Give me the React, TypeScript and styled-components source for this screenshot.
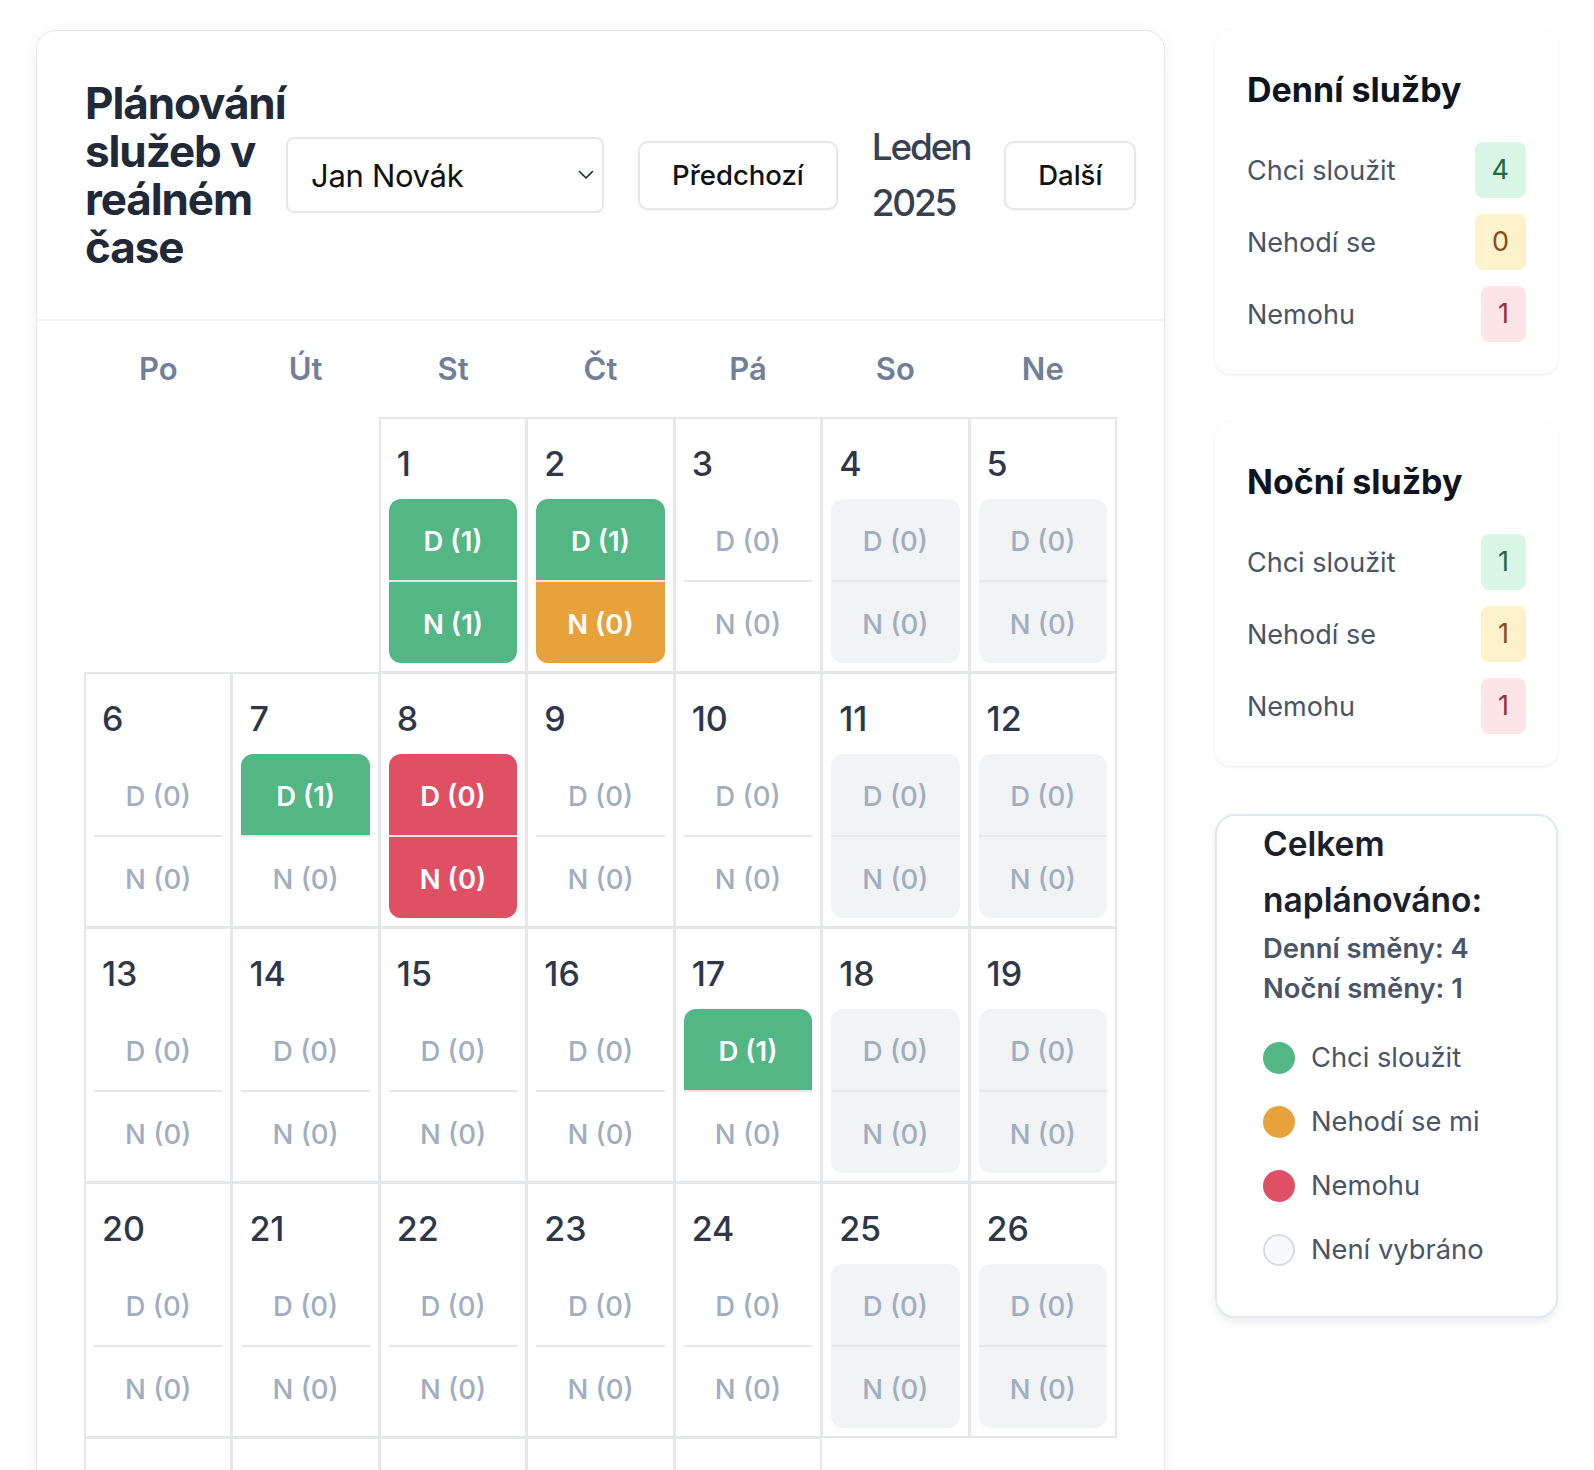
import React from 'react';
import styled, { createGlobalStyle } from 'styled-components';

const GlobalStyle = createGlobalStyle`
  html, body { margin: 0; padding: 0; background: #ffffff; }
  body {
    font-family: Inter, "Noto Sans", "Liberation Sans", sans-serif;
    color: #1a202c;
    -webkit-font-smoothing: antialiased;
  }
  * { box-sizing: border-box; }
`;

type Status = 'want' | 'meh' | 'no' | 'none';
type Tone = 'green' | 'yellow' | 'red';

const STATUS_BG: Record<Status, string> = {
  want: '#53b685',
  meh: '#e8a23b',
  no: '#e05065',
  none: 'transparent',
};

const TONES: Record<Tone, { bg: string; fg: string }> = {
  green: { bg: '#daf6e5', fg: '#276749' },
  yellow: { bg: '#fcf2cc', fg: '#8c4a17' },
  red: { bg: '#fce4e7', fg: '#9b2c3f' },
};

const Page = styled.div`
  display: flex;
  align-items: flex-start;
  gap: 50px;
  padding: 30px 36px;
`;

const MainCard = styled.section`
  flex: 1 1 auto;
  min-width: 0;
  background: #ffffff;
  border: 1px solid #e5e7eb;
  border-radius: 20px;
  box-shadow: 0 4px 20px rgba(0, 0, 0, 0.06);
`;

const Header = styled.header`
  display: flex;
  align-items: center;
  padding: 48px;
  border-bottom: 2px solid #f1f2f4;
`;

const Title = styled.h1`
  flex: 0 0 201px;
  margin: 0;
  font-size: 44px;
  line-height: 48px;
  font-weight: 700;
  letter-spacing: -0.025em;
  color: #1f2937;
`;

const Controls = styled.div`
  display: flex;
  align-items: center;
  gap: 34px;
`;

const SelectBox = styled.div`
  display: flex;
  align-items: center;
  justify-content: space-between;
  width: 318px;
  height: 76px;
  padding: 0 8px 0 23px;
  border: 2px solid #e5e7eb;
  border-radius: 8px;
  background: #ffffff;
  font-size: 31px;
  letter-spacing: -0.01em;
  color: #111111;
`;

const NavButton = styled.button`
  height: 69px;
  padding: 0 32px;
  border: 2px solid #e5e7eb;
  border-radius: 10px;
  background: #ffffff;
  box-shadow: 0 1px 2px rgba(0, 0, 0, 0.05);
  font-family: inherit;
  font-size: 27.5px;
  font-weight: 500;
  color: #111111;
  cursor: pointer;
`;

const Month = styled.div`
  width: min-content;
  font-size: 37px;
  line-height: 56px;
  font-weight: 500;
  letter-spacing: -0.06em;
  color: #374151;
`;

const CalendarBody = styled.div`
  padding: 24px 48px 48px;
`;

const WeekRow = styled.div`
  display: grid;
  grid-template-columns: repeat(7, 1fr);
  gap: 1px;
  height: 48px;
  margin-bottom: 25px;
`;

const WeekDay = styled.div`
  text-align: center;
  font-size: 31px;
  line-height: 48px;
  font-weight: 600;
  color: #718096;
`;

const Grid = styled.div`
  display: grid;
  grid-template-columns: repeat(7, 1fr);
  grid-auto-rows: 254px;
  gap: 1px;
`;

const EmptyCell = styled.div``;

const Cell = styled.div`
  display: flex;
  flex-direction: column;
  padding: 8px;
  border: 1px solid #e5e7eb;
  box-shadow: 0 0 0 1px #e5e7eb;
  background: #ffffff;
`;

const DayNum = styled.div`
  padding: 11px 8px 0;
  margin-bottom: 10px;
  font-size: 34px;
  line-height: 51px;
  font-weight: 500;
  color: #2d3748;
`;

const Block = styled.div<{ $weekend: boolean }>`
  display: flex;
  flex-direction: column;
  border-radius: 12px;
  overflow: hidden;
  background: ${(p) => (p.$weekend ? '#f2f3f5' : 'transparent')};
`;

const Slot = styled.div<{ $status: Status }>`
  height: 81px;
  display: flex;
  align-items: center;
  justify-content: center;
  padding-top: 2px;
  font-size: 27.5px;
  font-weight: ${(p) => (p.$status === 'none' ? 500 : 600)};
  background: ${(p) => STATUS_BG[p.$status]};
  color: ${(p) => (p.$status === 'none' ? '#a0aec0' : '#ffffff')};
`;

const SlotDivider = styled.div`
  height: 2px;
  background: #e5e7eb;
`;

const Side = styled.aside`
  flex: 0 0 343px;
  display: flex;
  flex-direction: column;
  gap: 48px;
`;

const StatCard = styled.div`
  background: #ffffff;
  border-radius: 16px;
  padding: 40px 32px 32px;
  box-shadow: 0 1px 4px rgba(0, 0, 0, 0.06), 0 1px 2px rgba(0, 0, 0, 0.03);
`;

const StatTitle = styled.h2`
  margin: 0 0 32px;
  font-size: 34px;
  line-height: 40px;
  font-weight: 700;
  color: #0f141e;
`;

const StatList = styled.div`
  display: flex;
  flex-direction: column;
  gap: 16px;
`;

const StatRow = styled.div`
  display: flex;
  align-items: center;
  justify-content: space-between;
`;

const StatLabel = styled.span`
  font-size: 27px;
  color: #4a5568;
`;

const Badge = styled.span<{ $tone: Tone }>`
  padding: 8px 17px;
  border-radius: 8px;
  font-size: 27px;
  line-height: 40px;
  background: ${(p) => TONES[p.$tone].bg};
  color: ${(p) => TONES[p.$tone].fg};
`;

const SummaryCard = styled.div`
  background: #ffffff;
  border: 2px solid #e2e8f0;
  border-radius: 20px;
  padding: 0 46px 50px;
  box-shadow: 0 4px 8px rgba(0, 0, 0, 0.08);
`;

const SummaryTitle = styled.h3`
  margin: 0;
  font-size: 33.5px;
  line-height: 56px;
  font-weight: 600;
  color: #1a202c;
`;

const SummaryLine = styled.div`
  font-size: 27.4px;
  line-height: 40px;
  font-weight: 600;
  color: #4a5568;
`;

const Legend = styled.div`
  margin-top: 34px;
  display: flex;
  flex-direction: column;
  gap: 32px;
`;

const LegendItem = styled.div`
  display: flex;
  align-items: center;
  gap: 16px;
  font-size: 27.3px;
  line-height: 32px;
  color: #4a5568;
`;

const Dot = styled.span<{ $color: string; $outlined?: boolean }>`
  width: 32px;
  height: 32px;
  border-radius: 50%;
  flex: 0 0 32px;
  background: ${(p) => p.$color};
  border: ${(p) => (p.$outlined ? '2px solid #d8dce2' : 'none')};
`;

const WEEKDAYS = ['Po', 'Út', 'St', 'Čt', 'Pá', 'So', 'Ne'];

const DAY_DATA: Record<number, { d: [Status, number]; n: [Status, number] }> = {
  1: { d: ['want', 1], n: ['want', 1] },
  2: { d: ['want', 1], n: ['meh', 0] },
  7: { d: ['want', 1], n: ['none', 0] },
  8: { d: ['no', 0], n: ['no', 0] },
  17: { d: ['want', 1], n: ['none', 0] },
};

const Chevron = () => (
  <svg width="16" height="10" viewBox="0 0 16 10" fill="none">
    <path d="M1.5 1.5 8 8l6.5-6.5" stroke="#1a202c" strokeWidth="1.6" strokeLinecap="round" strokeLinejoin="round" />
  </svg>
);

const DayCell = ({ day, col }: { day: number; col: number }) => {
  const data = DAY_DATA[day] ?? { d: ['none', 0] as [Status, number], n: ['none', 0] as [Status, number] };
  const weekend = col >= 5;
  return (
    <Cell>
      <DayNum>{day}</DayNum>
      <Block $weekend={weekend}>
        <Slot $status={data.d[0]}>D ({data.d[1]})</Slot>
        <SlotDivider />
        <Slot $status={data.n[0]}>N ({data.n[1]})</Slot>
      </Block>
    </Cell>
  );
};

const StatsCard = ({ title, values }: { title: string; values: [number, number, number] }) => (
  <StatCard>
    <StatTitle>{title}</StatTitle>
    <StatList>
      <StatRow>
        <StatLabel>Chci sloužit</StatLabel>
        <Badge $tone="green">{values[0]}</Badge>
      </StatRow>
      <StatRow>
        <StatLabel>Nehodí se</StatLabel>
        <Badge $tone="yellow">{values[1]}</Badge>
      </StatRow>
      <StatRow>
        <StatLabel>Nemohu</StatLabel>
        <Badge $tone="red">{values[2]}</Badge>
      </StatRow>
    </StatList>
  </StatCard>
);

export default function App() {
  const offset = 2; // 1 Jan 2025 = Wednesday
  const cells: React.ReactNode[] = [];
  for (let i = 0; i < offset; i++) cells.push(<EmptyCell key={`e${i}`} />);
  for (let d = 1; d <= 31; d++) {
    const col = (offset + d - 1) % 7;
    cells.push(<DayCell key={d} day={d} col={col} />);
  }

  return (
    <>
      <GlobalStyle />
      <Page>
        <MainCard>
          <Header>
            <Title>Plánování služeb v reálném čase</Title>
            <Controls>
              <SelectBox>
                <span>Jan Novák</span>
                <Chevron />
              </SelectBox>
              <NavButton>Předchozí</NavButton>
              <Month>Leden 2025</Month>
              <NavButton>Další</NavButton>
            </Controls>
          </Header>
          <CalendarBody>
            <WeekRow>
              {WEEKDAYS.map((w) => (
                <WeekDay key={w}>{w}</WeekDay>
              ))}
            </WeekRow>
            <Grid>{cells}</Grid>
          </CalendarBody>
        </MainCard>
        <Side>
          <StatsCard title="Denní služby" values={[4, 0, 1]} />
          <StatsCard title="Noční služby" values={[1, 1, 1]} />
          <SummaryCard>
            <SummaryTitle>Celkem naplánováno:</SummaryTitle>
            <SummaryLine>Denní směny: 4</SummaryLine>
            <SummaryLine>Noční směny: 1</SummaryLine>
            <Legend>
              <LegendItem>
                <Dot $color="#53b685" />
                Chci sloužit
              </LegendItem>
              <LegendItem>
                <Dot $color="#e8a23b" />
                Nehodí se mi
              </LegendItem>
              <LegendItem>
                <Dot $color="#e05065" />
                Nemohu
              </LegendItem>
              <LegendItem>
                <Dot $color="#f7f9fb" $outlined />
                Není vybráno
              </LegendItem>
            </Legend>
          </SummaryCard>
        </Side>
      </Page>
    </>
  );
}
